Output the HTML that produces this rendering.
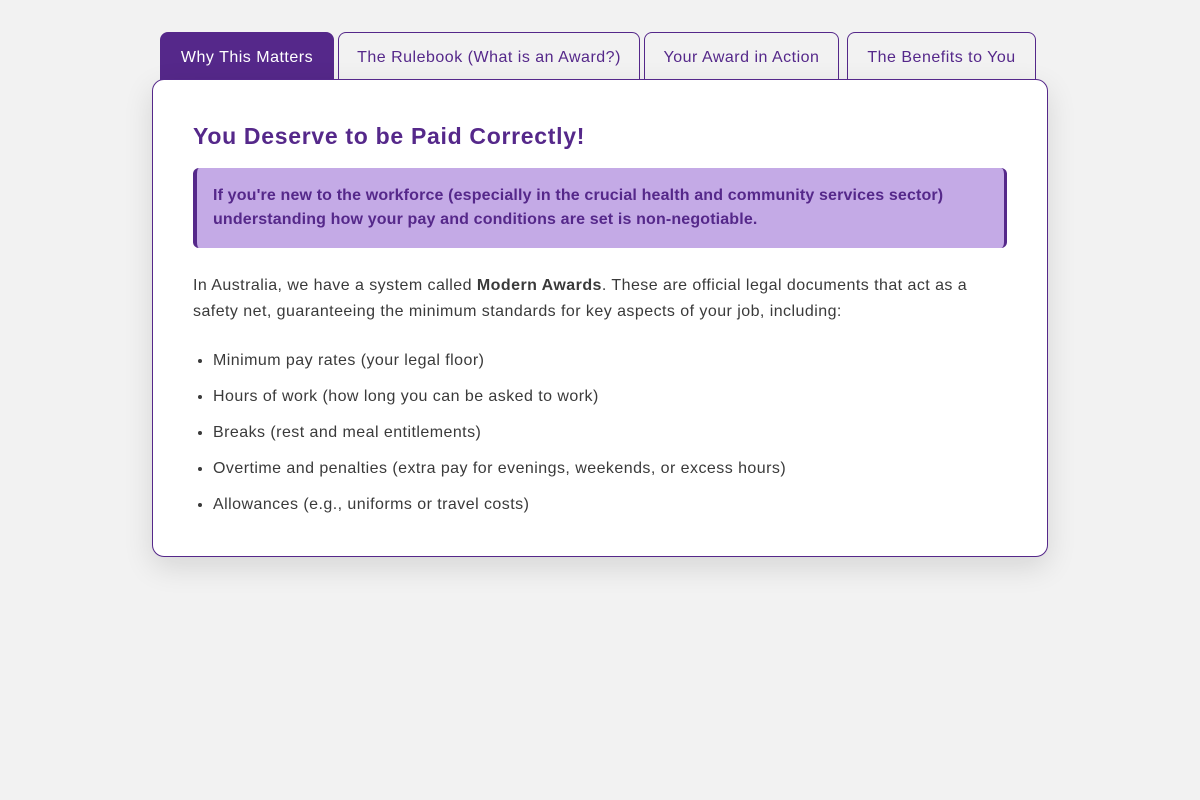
<!DOCTYPE html>
<html><head><style>
*{box-sizing:border-box;margin:0;padding:0}
body{width:1200px;height:800px;background:#f2f2f2;font-family:"Liberation Sans",sans-serif;position:relative;overflow:hidden}
.tab{position:absolute;top:32px;height:49px;border:1px solid #55288a;border-bottom:none;border-radius:8px 8px 0 0;background:#f2f2f2;color:#55288a;font-size:16px;text-align:center;line-height:50px;white-space:nowrap;letter-spacing:0.5px}
.tab.a{background:#55288a;color:#fff;height:48px}
.card{position:absolute;left:152px;top:79px;width:896px;height:478px;background:#fff;border:1px solid #55288a;border-radius:12px;box-shadow:0 10px 30px rgba(0,0,0,.12);padding:0 40px}
h1{position:absolute;left:40px;top:43px;font-size:23px;color:#55288a;font-weight:bold;letter-spacing:0.7px}
.call{position:absolute;left:40px;top:88px;width:814px;height:80px;background:#c4aae6;border-left:4px solid #55288a;border-right:3px solid #55288a;border-radius:6px;padding:16px 16px;color:#55288a;font-weight:bold;font-size:16px;line-height:24px;letter-spacing:0.15px}
.p{position:absolute;left:40px;top:193px;width:790px;font-size:16px;line-height:26px;color:#3a3a3a;letter-spacing:0.45px}
ul{position:absolute;left:60px;top:268px;font-size:16px;color:#3a3a3a;list-style:disc;letter-spacing:0.45px}
li{height:36px;line-height:26px}
</style></head><body>
<div class="tab a" style="left:160px;width:174px">Why This Matters</div>
<div class="tab" style="left:338px;width:302px">The Rulebook (What is an Award?)</div>
<div class="tab" style="left:644px;width:195px">Your Award in Action</div>
<div class="tab" style="left:847px;width:189px">The Benefits to You</div>
<div class="card">
<h1>You Deserve to be Paid Correctly!</h1>
<div class="call">If you're new to the workforce (especially in the crucial health and community services sector) understanding how your pay and conditions are set is non-negotiable.</div>
<div class="p">In Australia, we have a system called <b>Modern Awards</b>. These are official legal documents that act as a<br>safety net, guaranteeing the minimum standards for key aspects of your job, including:</div>
<ul>
<li>Minimum pay rates (your legal floor)</li>
<li>Hours of work (how long you can be asked to work)</li>
<li>Breaks (rest and meal entitlements)</li>
<li>Overtime and penalties (extra pay for evenings, weekends, or excess hours)</li>
<li>Allowances (e.g., uniforms or travel costs)</li>
</ul>
</div>
</body></html>
